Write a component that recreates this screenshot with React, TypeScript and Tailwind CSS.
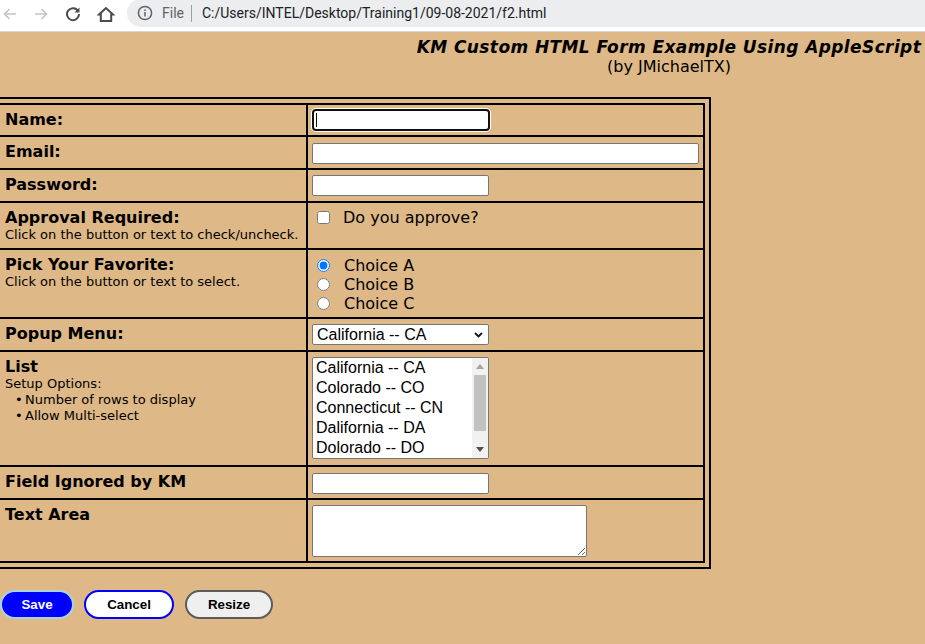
import React from "react";

function BackIcon({ color }: { color: string }) {
  return (
    <svg width="16" height="16" viewBox="0 0 16 16" fill="none" stroke={color} strokeWidth="1.6">
      <path d="M14 8H2.5M7.5 3L2.5 8L7.5 13" />
    </svg>
  );
}

function ForwardIcon({ color }: { color: string }) {
  return (
    <svg width="16" height="16" viewBox="0 0 16 16" fill="none" stroke={color} strokeWidth="1.6">
      <path d="M2 8H13.5M8.5 3L13.5 8L8.5 13" />
    </svg>
  );
}

function ReloadIcon() {
  return (
    <svg width="16" height="16" viewBox="0 0 16 16" fill="none">
      <path d="M13.2 5.2A6 6 0 1 0 14 8" stroke="#4a4d51" strokeWidth="2" />
      <path d="M14.5 1.5V6.5H9.5Z" fill="#4a4d51" />
    </svg>
  );
}

function HomeIcon() {
  return (
    <svg width="18" height="16" viewBox="0 0 18 16" fill="none" stroke="#4a4d51" strokeWidth="2" strokeLinejoin="miter">
      <path d="M9 2L2 8.5H3.8V15H14.2V8.5H16Z" />
    </svg>
  );
}

function InfoIcon() {
  return (
    <svg width="16" height="16" viewBox="0 0 16 16" fill="none">
      <circle cx="8" cy="8" r="6.6" stroke="#5f6368" strokeWidth="1.5" />
      <rect x="7.25" y="7" width="1.5" height="4.5" fill="#5f6368" />
      <rect x="7.25" y="4.4" width="1.5" height="1.5" fill="#5f6368" />
    </svg>
  );
}

function BrowserBar() {
  return (
    <div className="h-[32px] bg-white border-b border-[#d6d6d6] flex items-start">
      <div className="w-[127px] h-[27px] flex items-center">
        <div className="ml-[2px]"><BackIcon color="#c4c4c4" /></div>
        <div className="ml-[15px]"><ForwardIcon color="#c4c4c4" /></div>
        <div className="ml-[16px]"><ReloadIcon /></div>
        <div className="ml-[16px]"><HomeIcon /></div>
      </div>
      <div className="flex-1 h-[28px] mt-[-1px] bg-[#ebedef] rounded-l-full flex items-center pl-[10px] font-['Roboto',sans-serif] text-[14px]">
        <InfoIcon />
        <span className="ml-[9px] text-[#5f6368]">File</span>
        <span className="ml-[7px] w-px h-[17px] bg-[#9aa0a6]" />
        <span className="ml-[10px] text-[#202124]">C:/Users/INTEL/Desktop/Training1/09-08-2021/f2.html</span>
      </div>
    </div>
  );
}

interface RowProps {
  height: string;
  pad?: string;
  label: React.ReactNode;
  children: React.ReactNode;
}

function Row({ height, pad = "pt-[5px]", label, children }: RowProps) {
  return (
    <div className={`flex border-b-2 border-black ${height}`}>
      <div className="w-[308px] shrink-0 border-r-2 border-black pl-[5px] pt-[5px] leading-[19px]">{label}</div>
      <div className={`flex-1 pl-[4px] ${pad}`}>{children}</div>
    </div>
  );
}

function Label({ title, note }: { title: string; note?: string }) {
  return (
    <>
      <div className="font-bold text-[16px]">{title}</div>
      {note && <div className="text-[13px] leading-[16px]">{note}</div>}
    </>
  );
}

function TextBox({ width }: { width: string }) {
  return <input readOnly className={`block h-[21px] ${width} bg-white border border-[#767676] rounded-[2px]`} />;
}

const states = ["California -- CA", "Colorado -- CO", "Connecticut -- CN", "Dalifornia -- DA", "Dolorado -- DO"];

export default function App() {
  return (
    <div className="w-[925px] h-[644px] overflow-hidden bg-[#deb887] text-black font-['DejaVu_Sans',sans-serif]">
      <BrowserBar />

      <div className="flex justify-end pt-[6px]">
        <div className="w-[512px] text-center text-[16px] leading-[19px]">
          <div className="font-bold italic whitespace-nowrap text-[17px] tracking-[0.4px]">KM Custom HTML Form Example Using AppleScript</div>
          <div>(by JMichaelTX)</div>
        </div>
      </div>

      <div className="mt-[21px] w-[711px] border-2 border-l-0 border-black py-[4px] pr-[4px]">
        <div className="border-t-2 border-r-2 border-black">
          <Row height="h-[32px]" pad="pt-[4px]" label={<Label title="Name:" />}>
            <div className="relative w-[178px] h-[22px] bg-white border-2 border-[#101010] rounded-[4px] shadow-[0_0_0_1px_#ffffff]">
              <span className="absolute left-[2px] top-[2px] w-px h-[14px] bg-black" />
            </div>
          </Row>
          <Row height="h-[33px]" pad="pt-[6px]" label={<Label title="Email:" />}>
            <TextBox width="w-[387px]" />
          </Row>
          <Row height="h-[33px]" label={<Label title="Password:" />}>
            <TextBox width="w-[177px]" />
          </Row>
          <Row
            height="h-[47px]"
            pad="pt-[5px]"
            label={<Label title="Approval Required:" note="Click on the button or text to check/uncheck." />}
          >
            <label className="flex items-center h-[19px] text-[16px]">
              <input type="checkbox" className="m-0 ml-[5px] w-[13px] h-[13px]" />
              <span className="ml-[13px]">Do you approve?</span>
            </label>
          </Row>
          <Row
            height="h-[69px]"
            pad="pt-[6px]"
            label={<Label title="Pick Your Favorite:" note="Click on the button or text to select." />}
          >
            {["Choice A", "Choice B", "Choice C"].map((c, i) => (
              <label key={c} className="flex items-center h-[19px] text-[16px]">
                <input type="radio" name="fav" defaultChecked={i === 0} className="m-0 ml-[5px] w-[13px] h-[13px]" />
                <span className="ml-[14px]">{c}</span>
              </label>
            ))}
          </Row>
          <Row height="h-[33px]" label={<Label title="Popup Menu:" />}>
            <div className="flex items-center w-[177px] h-[21px] bg-white border border-[#767676] rounded-[2px] pl-[4px] pr-[5px] font-['Liberation_Sans',sans-serif] text-[16px] leading-[19px]">
              <span className="flex-1">California -- CA</span>
              <svg width="9" height="6" viewBox="0 0 9 6" fill="none" stroke="#111" strokeWidth="1.8">
                <path d="M1 1L4.5 4.5L8 1" />
              </svg>
            </div>
          </Row>
          <Row
            height="h-[115px]"
            label={
              <>
                <div className="font-bold text-[16px]">List</div>
                <div className="text-[13px] leading-[16px]">
                  <div>Setup Options:</div>
                  <div className="flex pl-[10px]"><span className="w-[10px]">•</span>Number of rows to display</div>
                  <div className="flex pl-[10px]"><span className="w-[10px]">•</span>Allow Multi-select</div>
                </div>
              </>
            }
          >
            <div className="flex w-[177px] h-[102px] bg-white border border-[#767676] rounded-[2px] overflow-hidden">
              <div className="flex-1 pl-[3px] font-['Liberation_Sans',sans-serif] text-[16px] leading-[20px]">
                {states.map((s) => (
                  <div key={s}>{s}</div>
                ))}
              </div>
              <div className="w-[16px] bg-[#f1f1f1] flex flex-col items-center">
                <div className="h-[17px] flex items-center justify-center">
                  <svg width="8" height="5" viewBox="0 0 8 5"><path d="M0 5L4 0L8 5Z" fill="#a3a3a3" /></svg>
                </div>
                <div className="w-[12px] h-[56px] bg-[#c1c1c1]" />
                <div className="flex-1" />
                <div className="h-[17px] flex items-center justify-center">
                  <svg width="8" height="5" viewBox="0 0 8 5"><path d="M0 0L4 5L8 0Z" fill="#505050" /></svg>
                </div>
              </div>
            </div>
          </Row>
          <Row height="h-[33px]" pad="pt-[6px]" label={<Label title="Field Ignored by KM" />}>
            <TextBox width="w-[177px]" />
          </Row>
          <Row height="h-[63px]" label={<Label title="Text Area" />}>
            <textarea readOnly className="block resize w-[275px] h-[52px] bg-white border border-[#767676] rounded-[2px]" />
          </Row>
        </div>
      </div>

      <div className="flex items-center mt-[21px] font-['Liberation_Sans',sans-serif] text-[13.33px] font-bold">
        <button className="w-[74px] h-[29px] rounded-full bg-[#0000ff] text-white border-2 border-[#a9d4de]">Save</button>
        <button className="ml-[10px] w-[90px] h-[29px] rounded-full bg-white text-black border-2 border-[#0000ff]">Cancel</button>
        <button className="ml-[11px] w-[88px] h-[29px] rounded-full bg-[#efefef] text-black border-2 border-[#5c5c5c]">Resize</button>
      </div>
    </div>
  );
}
